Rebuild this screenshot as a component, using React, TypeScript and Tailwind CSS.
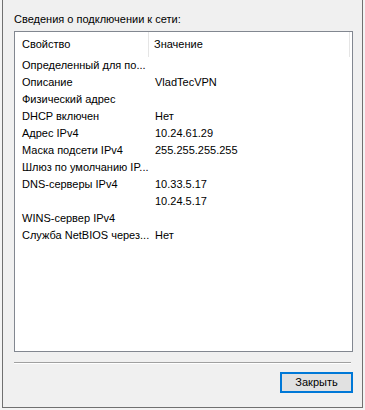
import React from "react";

const rows: [string, string][] = [
  ["Определенный для по...", ""],
  ["Описание", "VladTecVPN"],
  ["Физический адрес", ""],
  ["DHCP включен", "Нет"],
  ["Адрес IPv4", "10.24.61.29"],
  ["Маска подсети IPv4", "255.255.255.255"],
  ["Шлюз по умолчанию IP...", ""],
  ["DNS-серверы IPv4", "10.33.5.17"],
  ["", "10.24.5.17"],
  ["WINS-сервер IPv4", ""],
  ["Служба NetBIOS через...", "Нет"],
];

export default function App() {
  return (
    <div
      className="w-[365px] h-[410px] bg-[#f3f3f3] overflow-hidden text-[11px] text-black"
      style={{ fontFamily: '"Liberation Sans", Arial, sans-serif' }}
    >
      <div className="ml-[2px] w-[361px] h-[408px] border-l border-r border-b border-[#707070] bg-[#f0f0f0] flex flex-col">
        <div className="pl-[11px] pt-[12px] h-[31px] leading-[15px]">Сведения о подключении к сети:</div>
        <div className="ml-[11px] w-[339px] h-[321px] border border-[#828790] bg-white flex flex-col">
          <div className="flex h-[25px] items-center">
            <div className="w-[134px] h-full flex items-center pl-[7px] border-r border-[#e5e5e5]">Свойство</div>
            <div className="flex-1 h-full flex items-center pl-[5px] border-r border-[#e5e5e5] mr-[2px]">Значение</div>
          </div>
          {rows.map(([k, v], i) => (
            <div key={i} className="flex h-[17px] items-center leading-[17px]">
              <div className="w-[135px] pl-[7px] whitespace-nowrap overflow-hidden">{k}</div>
              <div className="flex-1 pl-[5px] whitespace-nowrap">{v}</div>
            </div>
          ))}
        </div>
        <div className="ml-[11px] mt-[10px] w-[337px] h-[2px] border-t border-[#a0a0a0] border-b border-b-white"></div>
        <div className="flex justify-end pr-[9px] mt-[8px]">
          <div className="w-[73px] h-[21px] border-2 border-[#0078d7] bg-[#e1e1e1] flex items-center justify-center leading-none">
            Закрыть
          </div>
        </div>
      </div>
    </div>
  );
}
